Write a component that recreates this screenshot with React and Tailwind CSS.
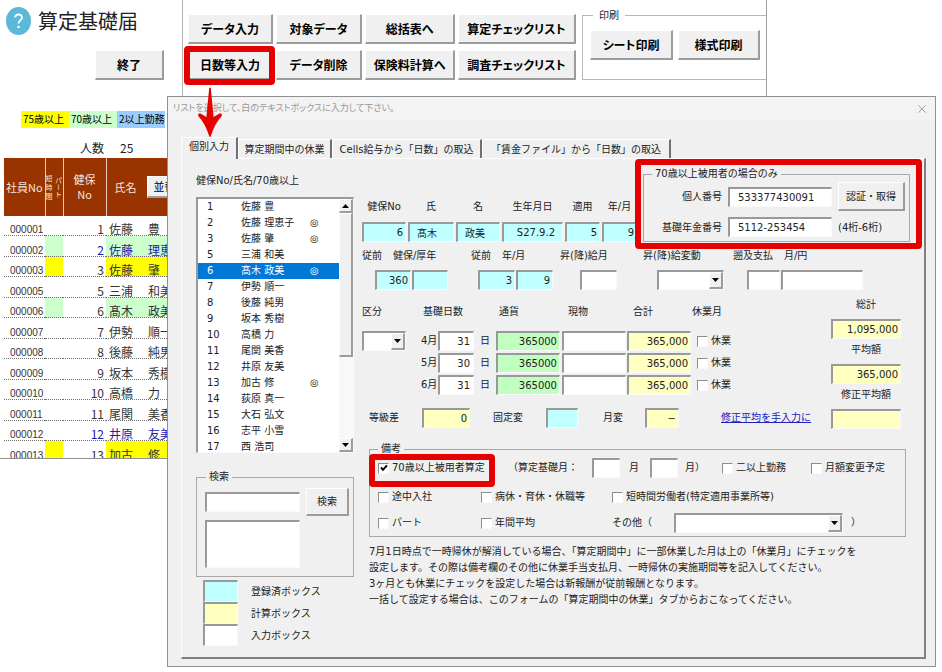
import React, { useState } from "react";
import clsx from "clsx";
import { X } from "lucide-react";

const employees = [
  { code: "000001", no: 1, last: "佐藤", first: "豊" },
  { code: "000002", no: 2, last: "佐藤", first: "理恵子", over70: true, mark: "green", linked: true },
  { code: "000003", no: 3, last: "佐藤", first: "肇", over70: true, mark: "yellow" },
  { code: "000005", no: 5, last: "三浦", first: "和美" },
  { code: "000006", no: 6, last: "髙木", first: "政美", over70: true, mark: "green" },
  { code: "000007", no: 7, last: "伊勢", first: "順一" },
  { code: "000008", no: 8, last: "後藤", first: "純男" },
  { code: "000009", no: 9, last: "坂本", first: "秀樹" },
  { code: "000010", no: 10, last: "高橋", first: "力" },
  { code: "000011", no: 11, last: "尾関", first: "美香" },
  { code: "000012", no: 12, last: "井原", first: "友美", linked: true },
  { code: "000013", no: 13, last: "加古", first: "修", over70: true, mark: "yellow" },
  { code: "000014", no: 14, last: "荻原", first: "真一" },
  { code: "000015", no: 15, last: "大石", first: "弘文" },
  { code: "000016", no: 16, last: "志平", first: "小雪" },
  { code: "000017", no: 17, last: "西", first: "浩司" },
];

const months = [
  { name: "4月", days: "31" },
  { name: "5月", days: "30" },
  { name: "6月", days: "31" },
];

const tabs = [
  { name: "個別入力", width: "w-[57px]" },
  { name: "算定期間中の休業", width: "w-[94px]" },
  { name: "Cells給与から「日数」の取込", width: "w-[150px]" },
  { name: "「賃金ファイル」から「日数」の取込", width: "w-[189px]" },
];

const tones = {
  white: "bg-white",
  cyan: "bg-[#c0ffff]",
  green: "bg-[#c0ffc0]",
  yellow: "bg-[#ffffc0]",
};

const sunken =
  "border-t-2 border-l-2 border-r border-b border-t-[#999] border-l-[#999] border-r-[#fafafa] border-b-[#fafafa]";
const raised =
  "border-t border-l border-r-2 border-b-2 border-t-white border-l-white border-r-[#9c9c9c] border-b-[#9c9c9c] bg-[#f0f0f0]";

function RedFrame({ className }) {
  return (
    <span
      className={clsx(
        "absolute z-10 rounded border-6 border-[#e60000] pointer-events-none",
        className
      )}
    />
  );
}

function SheetButton({ children, className }) {
  return (
    <button
      type="button"
      className={clsx(
        "h-[30px] text-xs font-bold text-black whitespace-nowrap cursor-pointer",
        raised,
        className
      )}
    >
      {children}
    </button>
  );
}

function Field({ tone = "white", className = "w-full text-right", ...props }) {
  return (
    <input
      type="text"
      className={clsx("block h-5 min-w-0 px-[2px] outline-none", sunken, tones[tone], className)}
      {...props}
    />
  );
}

function Combo({ className, ...props }) {
  return (
    <div className={clsx("relative h-5 bg-white", sunken, className)}>
      <select className="block w-full h-full appearance-none outline-none" {...props}>
        <option></option>
      </select>
      <span
        className={clsx(
          "absolute right-0 top-0 h-full w-[14px] flex items-center justify-center pointer-events-none",
          raised
        )}
      >
        <Triangle />
      </span>
    </div>
  );
}

function Triangle({ up }) {
  return (
    <svg width="7" height="4" viewBox="0 0 7 4">
      <path d={up ? "M0 4L3.5 0L7 4Z" : "M0 0L3.5 4L7 0Z"} fill="#000" />
    </svg>
  );
}

function Check({ label, defaultChecked, children }) {
  return (
    <label className="relative flex items-center gap-[3px] h-4 w-fit whitespace-nowrap">
      <input
        type="checkbox"
        defaultChecked={defaultChecked}
        className="peer appearance-none size-[11px] bg-white border-t border-l border-t-[#8c8c8c] border-l-[#8c8c8c] border-r border-b border-r-[#fafafa] border-b-[#fafafa]"
      />
      <svg
        className="absolute left-[2px] top-1 hidden peer-checked:block pointer-events-none"
        width="8"
        height="8"
        viewBox="0 0 8 8"
      >
        <path d="M1 3.5L3 5.8L7 1.4" fill="none" stroke="#000" strokeWidth="2" />
      </svg>
      {label}
      {children}
    </label>
  );
}

function SheetHeader() {
  return (
    <header className="flex h-24 [font-feature-settings:'palt']">
      <div className="w-[183px] shrink-0 border-r border-[#b4b4b4]">
        <div className="flex items-center gap-[7px] h-[42px] pl-[6px]">
          <svg width="25" height="28" viewBox="0 0 25 28">
            <ellipse cx="12.5" cy="14" rx="12.5" ry="14" fill="#5cb8d8" />
            <path
              d="M9.2 10.6C9.2 6.4 16 6.6 16 10.4C16 13.2 12.6 13.2 12.6 16.6"
              fill="none"
              stroke="#fff"
              strokeWidth="1.8"
            />
            <circle cx="12.6" cy="20" r="1.3" fill="#fff" />
          </svg>
          <h1 className="text-xl">算定基礎届</h1>
        </div>
        <SheetButton className="block w-[69px] mt-2 ml-[95px]">終了</SheetButton>
      </div>

      <div className="flex border-r border-[#a0a0a0] pl-[5px]">
        <div className="grid grid-cols-[85px_86px_90px_118px] gap-x-[3px] gap-y-[6px] content-start pt-[14px]">
          <SheetButton>データ入力</SheetButton>
          <SheetButton>対象データ</SheetButton>
          <SheetButton>総括表へ</SheetButton>
          <SheetButton>算定チェックリスト</SheetButton>
          <div className="relative">
            <SheetButton className="w-full">日数等入力</SheetButton>
            <RedFrame className="-left-1 -right-[2px] -top-1 -bottom-[5px]" />
            <svg
              className="absolute z-20 left-[10px] top-[37px]"
              width="24"
              height="50"
              viewBox="0 0 24 50"
            >
              <path
                d="M11.2 1Q12 0 12.8 1L15.6 30L21.5 26.6Q25 26 23.4 29.4Q17 36 12.6 49.5Q12 50.5 11.4 49.5Q7 36 0.6 29.4Q-1 26 2.5 26.6L8.4 30Z"
                fill="#e60000"
              />
            </svg>
          </div>
          <SheetButton>データ削除</SheetButton>
          <SheetButton>保険料計算へ</SheetButton>
          <SheetButton>調査チェックリスト</SheetButton>
        </div>
        <fieldset className="flex gap-[5px] h-[73px] mt-[7px] ml-[6px] pl-[7px] pr-[6px] pt-[7px] border border-r-0 border-[#b8b8b8]">
          <legend className="ml-[3px] px-[6px] text-[10px] leading-4">印刷</legend>
          <SheetButton className="w-[83px]">シート印刷</SheetButton>
          <SheetButton className="w-[82px]">様式印刷</SheetButton>
        </fieldset>
      </div>
    </header>
  );
}

function EmployeeSheet() {
  const fill = { green: "bg-[#ccffcc]", yellow: "bg-[#ffff00]" };

  return (
    <aside className="w-[167px] shrink-0 overflow-hidden pt-[15px]">
      <div className="flex ml-[21px] text-[10px] leading-4 text-black">
        <span className="w-12 h-[17px] pl-[2px] bg-[#ffff00]">75歳以上</span>
        <span className="w-12 h-[17px] pl-[2px] bg-[#ccffcc]">70歳以上</span>
        <span className="w-12 h-[17px] pl-[2px] bg-[#99ccff]">2以上勤務</span>
      </div>
      <p className="flex gap-4 pl-20 mt-3 mb-[2px] text-xs leading-4">
        <span>人数</span>
        <span>25</span>
      </p>
      <div className="h-[301px] overflow-hidden border-b border-[#909090]">
        <table className="table-fixed w-[213px] h-[304px] ml-1 border-collapse text-xs leading-[13px] text-[#333]">
          <thead>
            <tr className="h-[58px] bg-[#993300] text-[11px] text-[#f4e4dc]">
              <th className="w-[41px] p-0 font-normal whitespace-nowrap">社員No</th>
              <th className="w-[18px] p-0 font-normal border-x border-[#e8c8b8]">
                <span className="flex justify-center gap-[3px] text-[7px] leading-[9px]">
                  <span className="w-[7px]">短時間</span>
                  <span className="w-[7px] [writing-mode:vertical-rl]">パート</span>
                </span>
              </th>
              <th className="w-[43px] p-0 font-normal leading-[15px] border-r border-[#e8c8b8]">
                健保
                <br />
                No
              </th>
              <th className="p-0 font-normal">
                <span className="flex items-center gap-[10px] pl-2">
                  氏名
                  <button type="button" className={clsx("w-12 h-[22px] text-black", raised)}>
                    並替え
                  </button>
                </span>
              </th>
            </tr>
          </thead>
          <tbody>
            {employees.slice(0, 12).map((e) => (
              <tr key={e.code} className="border-b border-dotted border-[#707070]">
                <td className="p-0 pl-[6px] align-bottom text-[10px] leading-[11px] font-['Liberation_Sans',sans-serif]">
                  {e.code}
                </td>
                <td className={clsx("p-0", fill[e.mark])}></td>
                <td
                  className={clsx("p-0 pr-[2px] align-bottom text-right", e.linked && "text-[#2020b0]")}
                >
                  {e.no}
                </td>
                <td
                  className={clsx("p-0 pl-[3px] align-bottom", fill[e.mark], e.linked && "text-[#2020b0]")}
                >
                  <span className="flex gap-[15px] whitespace-nowrap">
                    <span>{e.last}</span>
                    <span>{e.first}</span>
                  </span>
                </td>
              </tr>
            ))}
          </tbody>
        </table>
      </div>
    </aside>
  );
}

function EmployeeList() {
  const [selected, setSelected] = useState(6);

  return (
    <div className="w-[158px] shrink-0 pt-[14px]">
      <p id="list-label" className="leading-4">
        健保No/氏名/70歳以上
      </p>
      <div className={clsx("flex h-64 mt-2 overflow-hidden bg-white", sunken)}>
        <ul role="listbox" aria-labelledby="list-label" className="flex-1">
          {employees.map((e) => (
            <li
              key={e.code}
              role="option"
              aria-selected={e.no === selected}
              onClick={() => setSelected(e.no)}
              className={clsx(
                "grid grid-cols-[34px_69px_1fr] pl-[9px] h-4 leading-4 whitespace-nowrap",
                e.no === selected && "bg-[#0078d7] text-white"
              )}
            >
              <span>{e.no}</span>
              <span>
                {e.last} {e.first}
              </span>
              <span>{e.over70 && "◎"}</span>
            </li>
          ))}
        </ul>
        <div className="flex flex-col w-[14px] bg-[#f8f8f8]">
          <button type="button" aria-label="上へ" className={clsx("h-[14px] flex items-center justify-center", raised)}>
            <Triangle up />
          </button>
          <div className={clsx("h-36", raised)} />
          <button
            type="button"
            aria-label="下へ"
            className={clsx("h-[14px] mt-auto flex items-center justify-center", raised)}
          >
            <Triangle />
          </button>
        </div>
      </div>

      <fieldset className="mt-4 pl-2 pt-[3px] pb-2 border border-[#a8a8a8]">
        <legend className="ml-[1px] px-[3px] leading-4">検索</legend>
        <div className="flex items-center gap-[6px]">
          <Field className="w-[95px]" aria-label="検索" />
          <button type="button" className={clsx("w-[43px] h-7 cursor-pointer", raised)}>
            検索
          </button>
        </div>
        <textarea
          aria-label="検索結果"
          className={clsx("block w-[95px] h-12 mt-1 resize-none outline-none bg-white", sunken)}
        />
      </fieldset>

      <ul className="mt-[3px] pl-[7px]">
        {[
          ["登録済ボックス", "cyan"],
          ["計算ボックス", "yellow"],
          ["入力ボックス", "white"],
        ].map(([name, tone]) => (
          <li key={name} className="flex items-center gap-[13px] h-[22px]">
            <span className={clsx("w-[35px] h-full", sunken, tones[tone])} />
            {name}
          </li>
        ))}
      </ul>
    </div>
  );
}

function Over70Group() {
  return (
    <div className="relative mt-[7px]">
      <fieldset className="pl-[6px] pr-1 pb-1 border border-[#a8a8a8]">
        <legend className="ml-[2px] px-[3px] leading-4">70歳以上被用者の場合のみ</legend>
        <div className="grid grid-cols-[72px_104px_67px] gap-x-[6px] gap-y-[6px] items-center">
          <label htmlFor="my-number" className="text-right">
            個人番号
          </label>
          <Field id="my-number" defaultValue="533377430091" className="w-full pl-2" />
          <button type="button" className={clsx("h-[29px] cursor-pointer whitespace-nowrap", raised)}>
            認証・取得
          </button>
          <label htmlFor="pension-number" className="text-right">
            基礎年金番号
          </label>
          <Field id="pension-number" defaultValue="5112-253454" className="w-full pl-2" />
          <span>(4桁-6桁)</span>
        </div>
      </fieldset>
      <RedFrame className="-left-2 -right-3 -top-[7px] -bottom-[7px]" />
    </div>
  );
}

function EntryForm() {
  return (
    <form className="flex-1 min-w-0">
      <div className="flex justify-between">
        <div className="grid grid-cols-[44px_46px_44px_61px_35px_35px] gap-x-[2px] gap-y-[7px] content-start pt-10 text-center leading-4">
          <label htmlFor="kenpo">健保No</label>
          <label htmlFor="last">氏</label>
          <label htmlFor="first">名</label>
          <label htmlFor="birth">生年月日</label>
          <label htmlFor="from-year">適用</label>
          <label htmlFor="from-month">年/月</label>
          <Field id="kenpo" tone="cyan" defaultValue="6" />
          <Field id="last" tone="cyan" defaultValue="髙木" className="w-full pl-[7px]" />
          <Field id="first" tone="cyan" defaultValue="政美" className="w-full pl-[7px]" />
          <Field id="birth" tone="cyan" defaultValue="S27.9.2" className="w-full text-right pr-[7px]" />
          <Field id="from-year" tone="cyan" defaultValue="5" />
          <Field id="from-month" tone="cyan" defaultValue="9" />
        </div>
        <Over70Group />
      </div>

      <div className="grid grid-cols-[109px_89px_83px_90px_1fr] gap-y-[6px] mt-[6px] leading-4 whitespace-nowrap">
        <label htmlFor="prev-kenpo" className="flex gap-[11px]">
          <span>従前</span>
          <span>健保/厚年</span>
        </label>
        <label htmlFor="prev-year" className="flex gap-[11px]">
          <span>従前</span>
          <span>年/月</span>
        </label>
        <label htmlFor="raise-month">昇(降)給月</label>
        <label htmlFor="raise-kind">昇(降)給変動</label>
        <label htmlFor="back-month" className="flex gap-[11px]">
          <span>遡及支払</span>
          <span>月/円</span>
        </label>
        <div className="flex gap-px pl-[13px]">
          <Field id="prev-kenpo" tone="cyan" defaultValue="360" className="w-9 text-right" />
          <Field aria-label="従前 厚年" tone="cyan" className="w-9 text-right" />
        </div>
        <div className="flex gap-px pl-[7px]">
          <Field id="prev-year" tone="cyan" defaultValue="3" className="w-[37px] text-right" />
          <Field aria-label="従前 月" tone="cyan" defaultValue="9" className="w-[37px] text-right" />
        </div>
        <div className="pl-5">
          <Field id="raise-month" className="w-[37px]" />
        </div>
        <div className="pl-[14px]">
          <Combo id="raise-kind" className="w-[67px]" />
        </div>
        <div className="flex gap-px pl-[14px]">
          <Field id="back-month" className="w-[33px]" />
          <Field aria-label="遡及支払 円" className="w-[82px]" />
        </div>
      </div>

      <div className="flex justify-between mt-[7px] pr-[9px] leading-4">
        <div className="pt-[7px]">
          <div className="grid grid-cols-[59px_75px_66px_65px_65px_auto] gap-y-[2px] items-center whitespace-nowrap">
            <label htmlFor="kubun">区分</label>
            <span className="pl-[2px]">基礎日数</span>
            <span className="pl-[3px]">通貨</span>
            <span className="pl-[6px]">現物</span>
            <span className="pl-[6px]">合計</span>
            <span>休業月</span>
            <span className="col-span-6 h-[7px]" />
            {months.map((m, i) => (
              <React.Fragment key={m.name}>
                {i === 0 ? <Combo id="kubun" className="w-[44px]" /> : <span />}
                <label className="flex items-center">
                  <span className="w-[17px]">{m.name}</span>
                  <Field defaultValue={m.days} className="w-[36px] text-right pr-[3px]" />
                  <span className="pl-[6px]">日</span>
                </label>
                <Field tone="green" aria-label={`${m.name} 通貨`} defaultValue="365000" className="w-16 text-right" />
                <Field aria-label={`${m.name} 現物`} className="w-16 text-right" />
                <Field tone="yellow" aria-label={`${m.name} 合計`} defaultValue="365,000" className="w-16 text-right" />
                <div className="pl-[5px]">
                  <Check label="休業" />
                </div>
              </React.Fragment>
            ))}
          </div>

          <div className="grid grid-cols-[53px_71px_53px_57px_42px_76px_auto] items-center mt-[13px] pl-[7px] whitespace-nowrap">
            <label htmlFor="grade-diff">等級差</label>
            <Field id="grade-diff" tone="yellow" defaultValue="0" className="w-12 text-right" />
            <label htmlFor="fixed-change">固定変</label>
            <Field id="fixed-change" tone="cyan" className="w-[32px]" />
            <label htmlFor="month-change">月変</label>
            <Field id="month-change" tone="yellow" defaultValue="−" className="w-[34px] text-right" />
            <a href="#manual" className="text-[#2020c0] underline">
              修正平均を手入力に
            </a>
          </div>
        </div>

        <div className="flex flex-col gap-[3px] w-[70px] text-center">
          {[
            ["総計", "1,095,000"],
            ["平均額", "365,000"],
            ["修正平均額", ""],
          ].map(([name, value]) => (
            <label key={name} className="flex flex-col gap-[6px]">
              {name}
              <Field tone="yellow" defaultValue={value} />
            </label>
          ))}
        </div>
      </div>

      <fieldset className="mt-[12px] ml-[7px] mr-1 pl-2 pt-px pb-[3px] border border-[#a8a8a8] leading-4 whitespace-nowrap">
        <legend className="px-[3px]">備考</legend>
        <div className="grid grid-cols-[130px_84px_37px_21px_35px_37px_89px_auto] items-center">
          <Check label="70歳以上被用者算定" defaultChecked>
            <RedFrame className="-left-[9px] -right-[10px] -top-[6px] -bottom-[11px]" />
          </Check>
          <label htmlFor="base-month1">（算定基礎月：</label>
          <Field id="base-month1" className="w-[28px]" />
          <span>月</span>
          <Field aria-label="算定基礎月 2" className="w-[28px]" />
          <span>月）</span>
          <Check label="二以上勤務" />
          <Check label="月額変更予定" />
        </div>
        <div className="grid grid-cols-[103px_131px_1fr] mt-[11px]">
          <Check label="途中入社" />
          <Check label="病休・育休・休職等" />
          <Check label="短時間労働者(特定適用事業所等)" />
        </div>
        <div className="grid grid-cols-[103px_131px_1fr] items-center mt-2">
          <Check label="パート" />
          <Check label="年間平均" />
          <div className="flex items-center">
            <label htmlFor="other" className="w-[62px]">
              その他（
            </label>
            <Combo id="other" className="w-[169px]" />
            <span className="pl-2">）</span>
          </div>
        </div>
      </fieldset>

      <p className="mt-[7px] pl-[7px] leading-4">
        7月1日時点で一時帰休が解消している場合、「算定期間中」に一部休業した月は上の「休業月」にチェックを
        <br />
        設定します。その際は備考欄のその他に休業手当支払月、一時帰休の実施期間等を記入してください。
        <br />
        3ヶ月とも休業にチェックを設定した場合は新報酬が従前報酬となります。
        <br />
        一括して設定する場合は、このフォームの「算定期間中の休業」タブからおこなってください。
      </p>
    </form>
  );
}

function EntryDialog() {
  const [active, setActive] = useState(0);

  return (
    <section
      role="dialog"
      aria-labelledby="dialog-title"
      className="flex-1 min-w-0 mr-[6px] pb-[7px] border border-[#909090] bg-[#f0f0f0] text-[10px] text-[#222] font-['DejaVu_Sans','Noto_Sans_CJK_JP',sans-serif]"
    >
      <div className="flex items-center justify-between h-6 pl-[5px] pr-[6px] bg-[#f3f3f3]">
        <h2 id="dialog-title" className="text-[9px] text-[#999] [font-feature-settings:'palt']">
          リストを選択して、白のテキストボックスに入力して下さい。
        </h2>
        <button type="button" aria-label="閉じる" className="cursor-pointer">
          <X size={14} strokeWidth={1.5} color="#999" />
        </button>
      </div>

      <div className="pl-[13px] pr-[9px] pt-4">
        <div role="tablist" className="flex items-end h-[21px]">
          {tabs.map((tab, i) => (
            <button
              key={tab.name}
              type="button"
              role="tab"
              aria-selected={i === active}
              onClick={() => setActive(i)}
              className={clsx(
                "shrink-0 border-t border-l border-r-2 border-t-white border-l-white border-r-[#707070] bg-[#f0f0f0] whitespace-nowrap",
                i === active ? "h-[22px] -mb-px pb-1" : "h-[19px]",
                tab.width
              )}
            >
              {tab.name}
            </button>
          ))}
        </div>
        <div className="flex gap-2 px-[14px] pb-[11px] border-t border-l border-r-2 border-b-2 border-t-white border-l-white border-r-[#808080] border-b-[#808080]">
          <EmployeeList />
          <EntryForm />
        </div>
      </div>
    </section>
  );
}

function App() {
  return (
    <div className="min-h-screen overflow-hidden bg-white text-[#222] font-['Noto_Sans_CJK_JP',sans-serif]">
      <SheetHeader />
      <main className="flex items-start">
        <EmployeeSheet />
        <EntryDialog />
      </main>
    </div>
  );
}

export default App;
